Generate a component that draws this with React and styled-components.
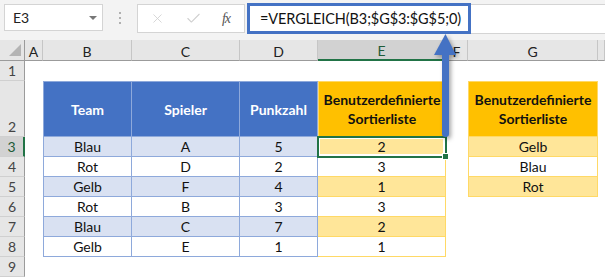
import React from 'react';
import styled, { createGlobalStyle, css } from 'styled-components';
import { X, Check } from 'lucide-react';

const GlobalStyle = createGlobalStyle`
  html, body { margin: 0; padding: 0; }
  body { font-family: Lato, "Open Sans", sans-serif; background: #fff; }
`;

const COLUMNS = ['A', 'B', 'C', 'D', 'E', 'F', 'G'];
const COL_TEMPLATE = '25px 18px 89px 108px 78px 128px 22px 130px 1fr';

const Window = styled.div`
  position: relative;
  width: 605px;
  height: 277px;
  overflow: hidden;
  background: #fff;
`;

const Toolbar = styled.div`
  height: 40px;
  box-sizing: border-box;
  display: flex;
  align-items: flex-start;
  padding: 4px 0 0 4px;
  background: #f3f3f3;
`;

const NameBox = styled.div`
  width: 99px;
  height: 27px;
  box-sizing: border-box;
  display: flex;
  align-items: center;
  justify-content: space-between;
  padding: 0 5px 0 8px;
  background: #fff;
  border: 1px solid #d4d4d4;
  font-size: 14px;
  color: #222;
`;

const Caret = styled.span`
  width: 0;
  height: 0;
  border-left: 4px solid transparent;
  border-right: 4px solid transparent;
  border-top: 4px solid #777;
`;

const Grip = styled.div`
  width: 34px;
  height: 27px;
  display: flex;
  flex-direction: column;
  align-items: center;
  justify-content: center;
  gap: 3px;
  span {
    width: 2px;
    height: 2px;
    background: #b0b0b0;
  }
`;

const FxBox = styled.div`
  width: 108px;
  height: 29px;
  box-sizing: border-box;
  display: flex;
  align-items: center;
  justify-content: space-around;
  padding: 0 4px 0 2px;
  background: #fff;
  border: 1px solid #d4d4d4;
  color: #cfcfcf;
`;

const FxLabel = styled.span`
  font-family: "Liberation Serif", serif;
  font-style: italic;
  font-size: 14px;
  color: #555;
  letter-spacing: -1px;
`;

const FormulaInput = styled.div`
  flex: 1;
  height: 30px;
  margin-left: 2px;
  box-sizing: border-box;
  background: #fff;
  border-top: 1px solid #d4d4d4;
  border-bottom: 1px solid #d4d4d4;
  display: flex;
  align-items: stretch;
`;

const FormulaHighlight = styled.div`
  width: 224px;
  margin: -2px 0 -1px 0;
  box-sizing: border-box;
  border: 3px solid #4472c4;
  display: flex;
  align-items: center;
  padding-left: 10px;
  font-size: 14.5px;
  letter-spacing: -0.1px;
  color: #111;
  white-space: nowrap;
`;

const Sheet = styled.div`
  display: grid;
  grid-template-columns: ${COL_TEMPLATE};
  grid-template-rows: 21px 20px 56px repeat(7, 20px);
  font-size: 14px;
`;

const HEAD_BG = '#e6e6e6';
const GREEN = '#217346';
const BLUE_LINE = '#8ea9db';
const GOLD_LINE = '#ffd966';

const Cell = styled.div`
  box-sizing: border-box;
  display: flex;
  align-items: center;
  justify-content: center;
  text-align: center;
  line-height: 19px;
  color: #111;
  background: #fff;

  ${({ $kind, $active, $alt, $first }) => {
    switch ($kind) {
      case 'corner':
        return css`
          background: ${HEAD_BG};
          border-right: 1px solid #9b9b9b;
          border-bottom: 1px solid #9b9b9b;
          align-items: flex-end;
          justify-content: flex-end;
          padding: 0 3px 4px 0;
        `;
      case 'colHead':
        return css`
          background: ${$active ? '#d2d2d2' : HEAD_BG};
          border-right: 1px solid #c6c6c6;
          border-bottom: ${$active ? `2px solid ${GREEN}` : '1px solid #9b9b9b'};
          color: ${$active ? '#1e5b38' : '#222'};
          padding-top: 2px;
        `;
      case 'rowHead':
        return css`
          background: ${$active ? '#d2d2d2' : HEAD_BG};
          border-bottom: 1px solid #d0d0d0;
          border-right: ${$active ? `2px solid ${GREEN}` : '1px solid #9b9b9b'};
          color: ${$active ? '#1e5b38' : '#444'};
          align-items: flex-end;
        `;
      case 'blueHead':
        return css`
          background: #4472c4;
          color: #fff;
          font-weight: 700;
          border-top: 1px solid ${BLUE_LINE};
          border-right: 1px solid ${BLUE_LINE};
          border-bottom: 1px solid ${BLUE_LINE};
          ${$first && css`border-left: 1px solid ${BLUE_LINE};`}
        `;
      case 'blue':
        return css`
          background: ${$alt ? '#d9e1f2' : '#fff'};
          border-right: 1px solid ${BLUE_LINE};
          border-bottom: 1px solid ${BLUE_LINE};
          ${$first && css`border-left: 1px solid ${BLUE_LINE};`}
        `;
      case 'goldHead':
        return css`
          background: #ffc000;
          font-weight: 700;
          border-top: 1px solid ${GOLD_LINE};
          border-right: 1px solid ${GOLD_LINE};
          border-bottom: 1px solid ${GOLD_LINE};
          ${$first && css`border-left: 1px solid ${GOLD_LINE};`}
        `;
      case 'gold':
        return css`
          background: ${$alt ? '#ffe699' : '#fff'};
          border-right: 1px solid ${GOLD_LINE};
          border-bottom: 1px solid ${GOLD_LINE};
          ${$first && css`border-left: 1px solid ${GOLD_LINE};`}
        `;
      default:
        return css``;
    }
  }}

  ${({ $selected }) =>
    $selected &&
    css`
      position: relative;
      z-index: 2;
      outline: 2px solid ${GREEN};
      outline-offset: -1px;
      box-shadow: inset 0 0 0 2px #fff;
      &::after {
        content: '';
        position: absolute;
        right: -4px;
        bottom: -4px;
        width: 5px;
        height: 5px;
        background: ${GREEN};
        border: 1px solid #fff;
      }
    `}
`;

const Arrow = styled.svg`
  position: absolute;
  left: 430px;
  top: 30px;
  z-index: 5;
  filter: drop-shadow(2px 2px 2px rgba(0, 0, 0, 0.35));
`;

const teams = [
  { team: 'Blau', player: 'A', score: 5, rank: 2 },
  { team: 'Rot', player: 'D', score: 2, rank: 3 },
  { team: 'Gelb', player: 'F', score: 4, rank: 1 },
  { team: 'Rot', player: 'B', score: 3, rank: 3 },
  { team: 'Blau', player: 'C', score: 7, rank: 2 },
  { team: 'Gelb', player: 'E', score: 1, rank: 1 },
];

const order = ['Gelb', 'Blau', 'Rot'];

function CornerMark() {
  return (
    <svg width="12" height="12" viewBox="0 0 12 12">
      <polygon points="12,0 12,12 0,12" fill="#b4b4b4" />
    </svg>
  );
}

function buildRows() {
  const rows = [];
  // row 1: empty
  rows.push([null, null, null, null, null, null, null]);
  // row 2: headers
  rows.push([
    null,
    { kind: 'blueHead', text: 'Team', first: true },
    { kind: 'blueHead', text: 'Spieler' },
    { kind: 'blueHead', text: 'Punkzahl' },
    { kind: 'goldHead', text: 'Benutzerdefinierte Sortierliste', first: true },
    null,
    { kind: 'goldHead', text: 'Benutzerdefinierte Sortierliste', first: true },
  ]);
  teams.forEach((t, i) => {
    const alt = i % 2 === 0;
    rows.push([
      null,
      { kind: 'blue', text: t.team, alt, first: true },
      { kind: 'blue', text: t.player, alt },
      { kind: 'blue', text: t.score, alt },
      { kind: 'gold', text: t.rank, alt, selected: i === 0 },
      null,
      i < order.length ? { kind: 'gold', text: order[i], alt, first: true } : null,
    ]);
  });
  rows.push([null, null, null, null, null, null, null]);
  return rows;
}

export default function App() {
  const rows = buildRows();
  return (
    <Window>
      <GlobalStyle />
      <Toolbar>
        <NameBox>
          E3
          <Caret />
        </NameBox>
        <Grip>
          <span />
          <span />
          <span />
        </Grip>
        <FxBox>
          <X size={15} strokeWidth={1.3} />
          <Check size={17} strokeWidth={1.5} />
          <FxLabel>fx</FxLabel>
        </FxBox>
        <FormulaInput>
          <FormulaHighlight>=VERGLEICH(B3;$G$3:$G$5;0)</FormulaHighlight>
        </FormulaInput>
      </Toolbar>

      <Sheet>
        <Cell $kind="corner">
          <CornerMark />
        </Cell>
        {COLUMNS.map((c) => (
          <Cell key={c} $kind="colHead" $active={c === 'E'}>
            {c}
          </Cell>
        ))}
        <Cell $kind="colHead" />

        {rows.map((cells, r) => (
          <React.Fragment key={r}>
            <Cell $kind="rowHead" $active={r === 2}>
              {r + 1}
            </Cell>
            {cells.map((cell, c) =>
              cell ? (
                <Cell
                  key={c}
                  $kind={cell.kind}
                  $alt={cell.alt}
                  $first={cell.first}
                  $selected={cell.selected}
                >
                  {cell.text}
                </Cell>
              ) : (
                <Cell key={c} />
              )
            )}
            <Cell />
          </React.Fragment>
        ))}
      </Sheet>

      <Arrow width="34" height="112" viewBox="0 0 34 112">
        <path d="M12 24 H19 V104 Q19 107 15.5 107 Q12 107 12 104 Z" fill="#4472c4" />
        <polygon points="4,25 15.5,4 26,25" fill="#4472c4" />
      </Arrow>
    </Window>
  );
}
